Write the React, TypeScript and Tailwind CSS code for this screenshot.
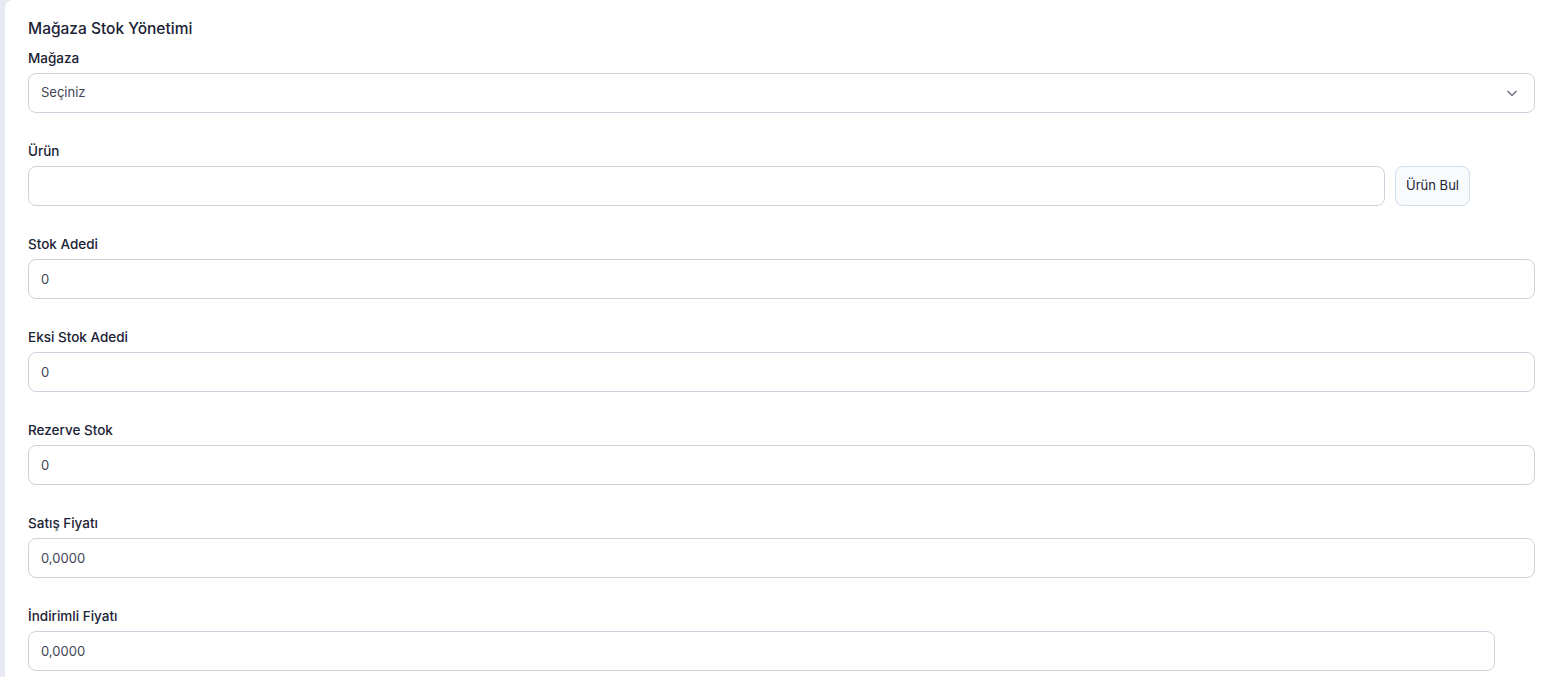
import React from "react";

type FieldProps = {
  label: string;
  value?: string;
  className?: string;
};

const font = { fontFamily: "Inter, 'Noto Sans', sans-serif" };

function Field({ label, value = "", className = "" }: FieldProps) {
  return (
    <div className={"flex flex-col " + className}>
      <label className="mb-[5px] h-5 text-[13.5px] font-medium leading-5 text-[#1b2235]">{label}</label>
      <input
        readOnly
        value={value}
        className="h-10 w-full rounded-lg border border-[#cdd3dd] bg-white px-3 text-[13px] text-[#3f4657] outline-none"
      />
    </div>
  );
}

export default function App() {
  return (
    <div className="flex min-h-[677px] w-full bg-[#e7eaf2] pl-[5px]" style={font}>
      <div className="flex-1 rounded-tl-lg bg-white pl-[23px] pr-[21px] pt-[17px] pb-4">
        <h1 className="h-6 text-[15.5px] font-medium leading-6 text-[#1b2235]">Mağaza Stok Yönetimi</h1>

        <div className="mt-[7px] flex flex-col gap-7">
          <div className="flex flex-col">
            <label className="mb-[5px] h-5 text-[13.5px] font-medium leading-5 text-[#1b2235]">Mağaza</label>
            <div className="flex h-10 items-center justify-between rounded-lg border border-[#cdd3dd] bg-white pl-3 pr-4 text-[13px] text-[#3f4657]">
              <span>Seçiniz</span>
              <svg className="h-3 w-3 text-[#5a6375]" viewBox="0 0 12 12" fill="none" stroke="currentColor" strokeWidth="1.2" aria-hidden="true">
                <path d="M1.5 4 6 8.5 10.5 4" />
              </svg>
            </div>
          </div>

          <div className="flex flex-col">
            <label className="mb-[5px] h-5 text-[13.5px] font-medium leading-5 text-[#1b2235]">Ürün</label>
            <div className="flex items-center gap-[10px] pr-[65px]">
              <input
                readOnly
                className="h-10 flex-1 rounded-lg border border-[#cdd3dd] bg-white px-3 text-[13px] outline-none"
              />
              <button
                type="button"
                className="h-10 w-[75px] rounded-lg border border-[#cfdcf3] bg-[#f8fafc] text-[13px] text-[#1b2235]"
              >
                Ürün Bul
              </button>
            </div>
          </div>

          <Field label="Stok Adedi" value="0" />
          <Field label="Eksi Stok Adedi" value="0" />
          <Field label="Rezerve Stok" value="0" />
          <Field label="Satış Fiyatı" value="0,0000" />
          <Field label="İndirimli Fiyatı" value="0,0000" className="pr-10" />
        </div>
      </div>
    </div>
  );
}
